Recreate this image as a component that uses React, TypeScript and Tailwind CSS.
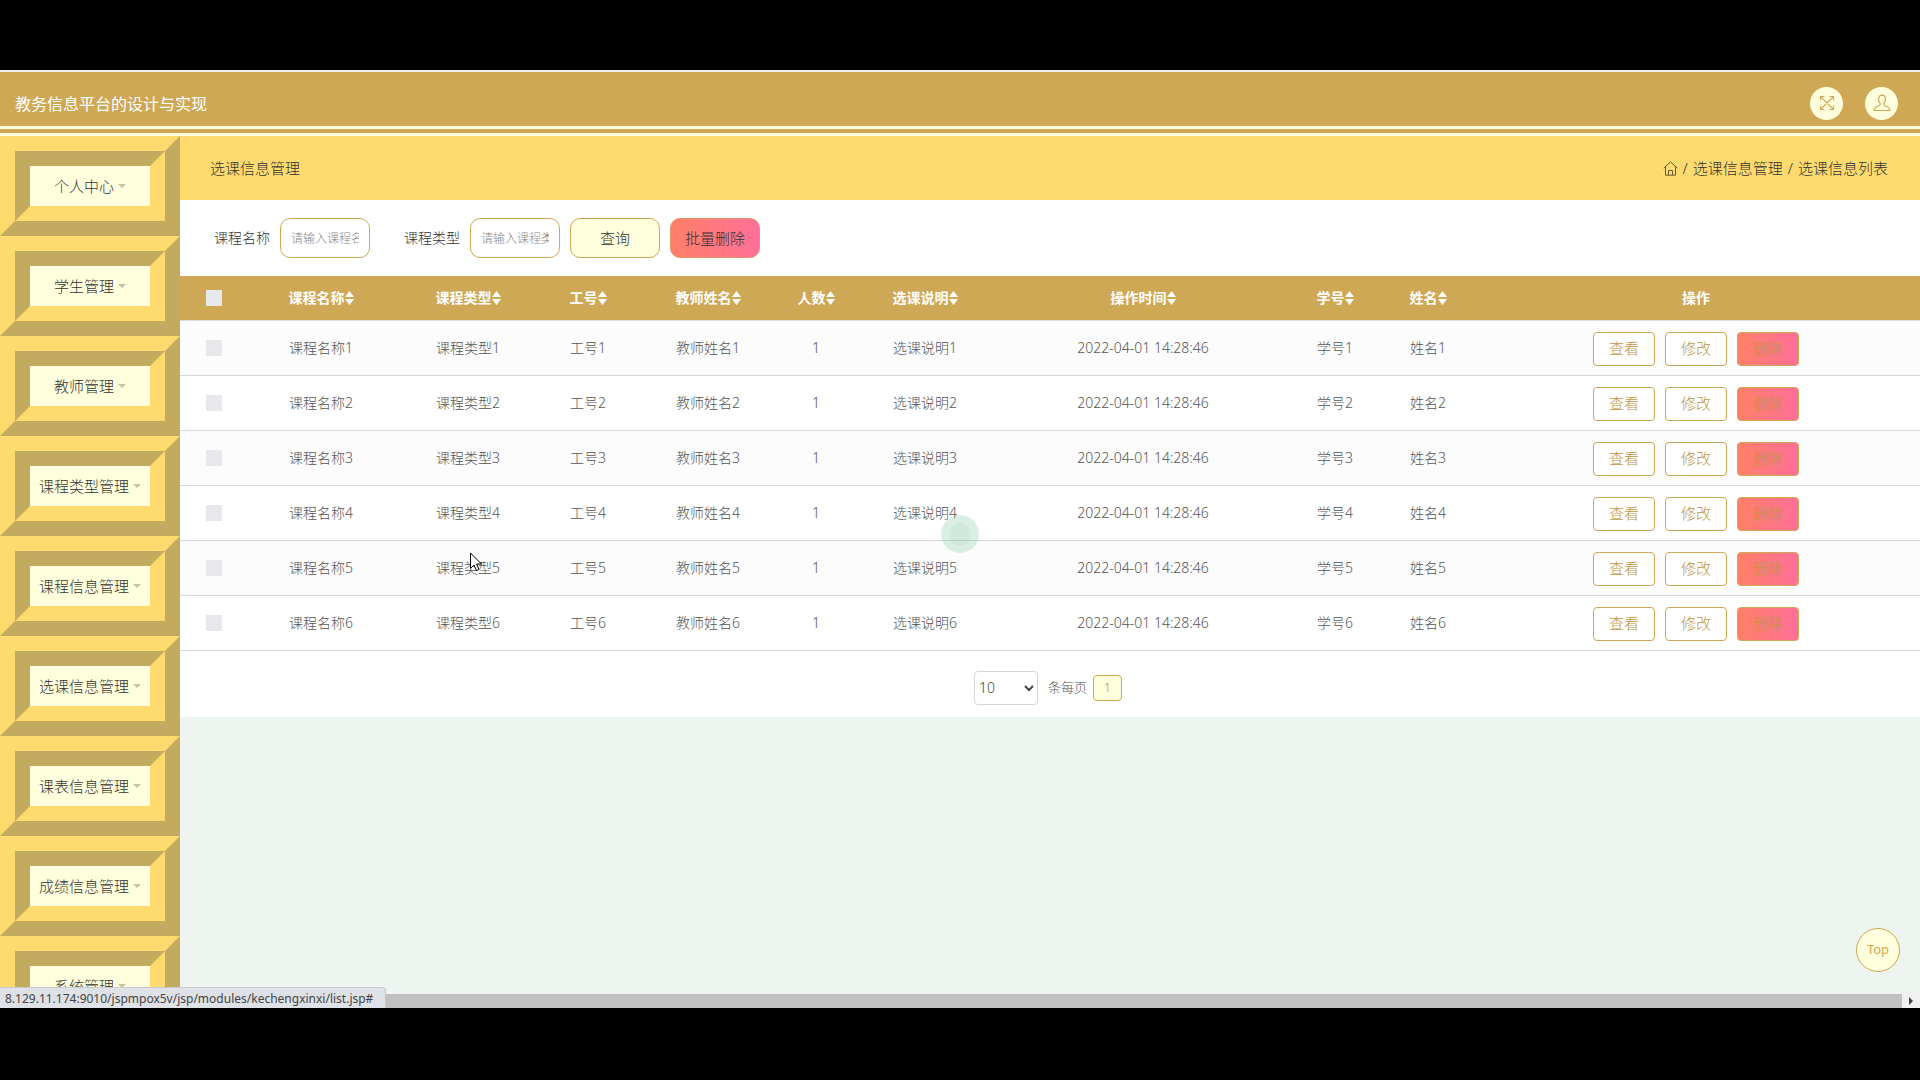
import React, { useState } from 'react';

const menus = [
  '个人中心',
  '学生管理',
  '教师管理',
  '课程类型管理',
  '课程信息管理',
  '选课信息管理',
  '课表信息管理',
  '成绩信息管理',
  '系统管理',
];

const columns = ['课程名称', '课程类型', '工号', '教师姓名', '人数', '选课说明', '操作时间', '学号', '姓名'];

const rows = [1, 2, 3, 4, 5, 6].map((n) => [
  `课程名称${n}`,
  `课程类型${n}`,
  `工号${n}`,
  `教师姓名${n}`,
  '1',
  `选课说明${n}`,
  '2022-04-01 14:28:46',
  `学号${n}`,
  `姓名${n}`,
]);

function SortIcon() {
  return (
    <svg className="inline-block h-3.5 w-[9px] align-[-2px]" viewBox="0 0 9 14" fill="currentColor">
      <path d="M0 6L4.5 0L9 6zM0 8h9L4.5 14z" />
    </svg>
  );
}

function FullscreenIcon() {
  return (
    <svg className="h-4 w-4" viewBox="0 0 16 16" fill="none" stroke="currentColor" strokeWidth="1.1">
      <path d="M1.5 1.5L14.5 14.5M14.5 1.5L1.5 14.5M1.5 5.5V1.5H5.5M10.5 1.5H14.5V5.5M14.5 10.5V14.5H10.5M5.5 14.5H1.5V10.5" />
    </svg>
  );
}

function UserIcon() {
  return (
    <svg className="h-[18px] w-[18px]" viewBox="0 0 18 18" fill="none" stroke="currentColor" strokeWidth="1.2" strokeLinejoin="round">
      <path d="M9 1.2C6.8 1.2 5.6 2.7 5.6 5C5.6 7.2 6.2 8.6 7.3 9.6C7.6 11 6.8 11.5 5.5 12C3 12.8 1.3 13.8 1.2 16.5H16.8C16.7 13.8 15 12.8 12.5 12C11.2 11.5 10.4 11 10.7 9.6C11.8 8.6 12.4 7.2 12.4 5C12.4 2.7 11.2 1.2 9 1.2Z" />
    </svg>
  );
}

function HomeIcon() {
  return (
    <svg className="h-[15px] w-[15px]" viewBox="0 0 15 15" fill="none" stroke="currentColor" strokeWidth="1">
      <path d="M0.7 7L7.5 1L14.3 7M2.5 5.5V14.2H12.5V5.5M5.5 14V9.5H9.5V14" />
    </svg>
  );
}

function MenuItem({ label }: { label: string }) {
  return (
    <li className="border-[15px] border-t-[#ffdb6f] border-r-[#c2aa5f] border-b-[#c2aa5f] border-l-[#ffdb6f]">
      <div className="border-[15px] border-t-[#c2aa5f] border-r-[#ffdb6f] border-b-[#ffdb6f] border-l-[#c2aa5f]">
        <a href="#" className="flex h-10 items-center justify-center gap-1 bg-[#ffffdd] text-[15px] whitespace-nowrap text-[#333]">
          {label}
          <svg className="h-1 w-2 text-[#c4c4a4]" viewBox="0 0 8 4" fill="currentColor">
            <path d="M0 0h8L4 4z" />
          </svg>
        </a>
      </div>
    </li>
  );
}

function SearchField({ id, label, placeholder }: { id: string; label: string; placeholder: string }) {
  return (
    <div className="flex items-center gap-2.5">
      <label htmlFor={id} className="text-sm text-[#333]">{label}</label>
      <input
        id={id}
        type="text"
        placeholder={placeholder}
        className="h-10 w-[90px] rounded-[10px] border border-[#cfa855] bg-white px-2.5 text-xs text-[#333] placeholder:text-[#888]"
      />
    </div>
  );
}

export default function App() {
  const [selected, setSelected] = useState<number[]>([]);
  const [pageSize, setPageSize] = useState('10');

  const toggleRow = (i: number) => {
    setSelected((prev) => (prev.includes(i) ? prev.filter((n) => n !== i) : [...prev, i]));
  };

  const toggleAll = () => {
    setSelected(selected.length === rows.length ? [] : rows.map((_, i) => i));
  };

  const checkboxClass = 'block mx-auto size-4 appearance-none bg-[#e6e8eb] checked:bg-[#cfa855]';
  const actionClass = 'h-[34px] w-[62px] rounded border border-[#cfa855] text-[15px] text-[#c0963c]';

  return (
    <div className="h-screen bg-black pt-[70px] pb-[72px] font-['Noto_Sans','Noto_Sans_CJK_SC',sans-serif] font-light">
      <div className="relative flex h-full flex-col overflow-hidden border-t-2 border-[#eee] bg-[#eef5f1]">
        <header className="flex h-16 shrink-0 items-center justify-between border-b-[10px] border-double border-[#ffffdd] bg-[#cfa855] pr-[22px] pl-[15px]">
          <h1 className="pt-2.5 text-base font-normal text-white">教务信息平台的设计与实现</h1>
          <div className="flex gap-[22px] pt-2 text-[#cfa855]">
            <button aria-label="全屏" className="flex size-[33px] items-center justify-center rounded-full bg-[#ffffdd]">
              <FullscreenIcon />
            </button>
            <button aria-label="用户" className="flex size-[33px] items-center justify-center rounded-full bg-[#ffffdd]">
              <UserIcon />
            </button>
          </div>
        </header>

        <div className="flex min-h-0 flex-1">
          <nav className="w-[180px] shrink-0 overflow-hidden">
            <ul>
              {menus.map((m) => (
                <MenuItem key={m} label={m} />
              ))}
            </ul>
          </nav>

          <main className="min-w-0 flex-1">
            <div className="flex h-16 items-center justify-between bg-[#ffdb6f] pr-8 pl-[30px] text-[15px] text-[#333]">
              <h2 className="font-light">选课信息管理</h2>
              <div className="flex items-center gap-[5px]">
                <a href="#" aria-label="首页" className="text-[#665a30]"><HomeIcon /></a>
                <span>/</span>
                <a href="#">选课信息管理</a>
                <span>/</span>
                <span>选课信息列表</span>
              </div>
            </div>

            <section className="bg-white pb-3">
              <form className="flex h-[76px] items-center gap-2.5 pl-[34px]" onSubmit={(e) => e.preventDefault()}>
                <div className="flex gap-[34px]">
                  <SearchField id="kechengmingcheng" label="课程名称" placeholder="请输入课程名称" />
                  <SearchField id="kechengleixing" label="课程类型" placeholder="请输入课程类型" />
                </div>
                <button type="submit" className="h-10 w-[90px] rounded-[10px] border border-[#cfa855] bg-[#ffffdd] text-[15px] text-[#333]">
                  查询
                </button>
                <button type="button" className="h-10 w-[90px] rounded-[10px] border border-[#e0946a] bg-linear-to-r from-[#ff7f66] to-[#ff6f97] text-[15px] text-[#333]">
                  批量删除
                </button>
              </form>

              <table className="w-full table-fixed text-center text-sm">
                <colgroup>
                  <col className="w-[68px]" />
                  <col className="w-[146px]" />
                  <col className="w-[148px]" />
                  <col className="w-[92px]" />
                  <col className="w-[148px]" />
                  <col className="w-[68px]" />
                  <col className="w-[150px]" />
                  <col className="w-[286px]" />
                  <col className="w-[98px]" />
                  <col className="w-[88px]" />
                  <col />
                </colgroup>
                <thead>
                  <tr className="h-11 border-b border-[#dcdcdc] bg-[#cfa855] text-white">
                    <th>
                      <input
                        type="checkbox"
                        aria-label="全选"
                        checked={selected.length === rows.length}
                        onChange={toggleAll}
                        className={checkboxClass}
                      />
                    </th>
                    {columns.map((c) => (
                      <th key={c} className="font-bold">{c}<SortIcon /></th>
                    ))}
                    <th className="font-bold">操作</th>
                  </tr>
                </thead>
                <tbody className="text-[#555]">
                  {rows.map((row, i) => (
                    <tr key={i} className="h-[55px] border-b border-[#d8d8d8] odd:bg-[#fcfcfd]">
                      <td>
                        <input
                          type="checkbox"
                          aria-label={row[0]}
                          checked={selected.includes(i)}
                          onChange={() => toggleRow(i)}
                          className={checkboxClass}
                        />
                      </td>
                      {row.map((cell, j) => (
                        <td key={j}>{cell}</td>
                      ))}
                      <td>
                        <div className="flex justify-center gap-2.5 pt-0.5">
                          <button className={`${actionClass} bg-white`}>查看</button>
                          <button className={`${actionClass} bg-white`}>修改</button>
                          <button className={`${actionClass} bg-linear-to-r from-[#ff7f66] to-[#ff6f97]`}>删除</button>
                        </div>
                      </td>
                    </tr>
                  ))}
                </tbody>
              </table>

              <div className="flex items-center justify-center pt-5 pr-1 text-[13px] text-[#555]">
                <select
                  id="pageSize"
                  value={pageSize}
                  onChange={(e) => setPageSize(e.target.value)}
                  className="h-[34px] w-16 rounded border border-[#d4d4d4] bg-white text-sm text-[#444]"
                >
                  <option>10</option>
                  <option>25</option>
                  <option>50</option>
                </select>
                <label htmlFor="pageSize" className="mr-1.5 ml-2.5">条每页</label>
                <button className="h-[26px] w-[29px] rounded border border-[#cfa855] bg-[#ffffdd] text-[#c0963c]">1</button>
              </div>
            </section>
          </main>
        </div>

        {/* horizontal scrollbar */}
        <div className="absolute inset-x-0 bottom-0 flex h-3.5 items-center bg-[#f1f1f1]">
          <div className="h-3.5 flex-1 bg-[#c1c1c1]" />
          <svg className="mx-[7px] h-2 w-1" viewBox="0 0 4 8" fill="#444">
            <path d="M0 0L4 4L0 8z" />
          </svg>
        </div>
        <div className="absolute bottom-0 left-0 h-[21px] rounded-tr border-t border-r border-[#c8cacd] bg-[#dee1e6] pr-3 pl-[5px] text-xs leading-[22px] font-normal text-[#444]">
          8.129.11.174:9010/jspmpox5v/jsp/modules/kechengxinxi/list.jsp#
        </div>

        <button className="absolute right-5 bottom-9 size-11 rounded-full border border-[#cfa855] bg-[#ffffdd] text-[13px] font-normal text-[#cfa855]">
          Top
        </button>

        {/* click ripple and mouse pointer */}
        <div className="absolute top-[443px] left-[941px] flex size-[38px] items-center justify-center rounded-full bg-[#6bbf95]/25">
          <div className="size-[22px] rounded-full bg-[#6bbf95]/10" />
        </div>
        <svg className="absolute top-[480px] left-[470px] h-5 w-3" viewBox="0 0 12 20" fill="white" stroke="black" strokeWidth="1">
          <path d="M0.5 1V16.5L4 13L6.5 18.5L9 17.5L6.6 12H11.5Z" />
        </svg>
      </div>
    </div>
  );
}
